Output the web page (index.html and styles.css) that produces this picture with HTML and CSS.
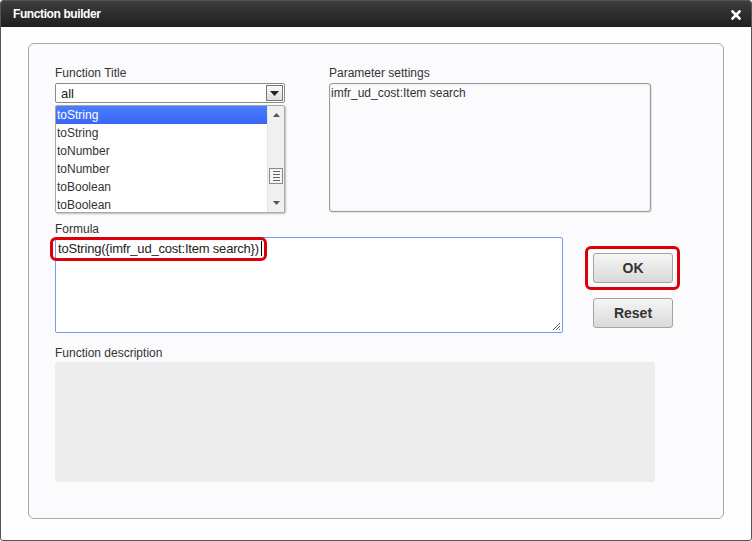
FILE: index.html
```html
<!DOCTYPE html>
<html lang="en">
<head>
    <meta charset="UTF-8">
    <title>Function builder</title>
    <link rel="stylesheet" href="styles.css">
</head>
<body>
    <div class="dialog">
        <div class="titlebar">
            <span class="title">Function builder</span>
            <svg class="close" width="10" height="10" viewBox="0 0 10 10">
                <path d="M1.5 1.5 L8.5 8.5 M8.5 1.5 L1.5 8.5" stroke="#fff" stroke-width="2.6" stroke-linecap="square"/>
            </svg>
        </div>

        <div class="panel">
            <!-- Título e parâmetros -->
            <div class="row top-row">
                <div class="col-func">
                    <label class="field-label">Function Title</label>
                    <div class="select">
                        <span>all</span>
                        <span class="select-btn">
                            <svg width="9" height="5" viewBox="0 0 9 5"><path d="M0 0 H9 L4.5 5 Z" fill="#222"/></svg>
                        </span>
                    </div>
                    <div class="list">
                        <ul class="items">
                            <li class="selected">toString</li>
                            <li>toString</li>
                            <li>toNumber</li>
                            <li>toNumber</li>
                            <li>toBoolean</li>
                            <li>toBoolean</li>
                        </ul>
                        <div class="scrollbar">
                            <svg class="arrow" width="7" height="4" viewBox="0 0 7 4"><path d="M0 4 H7 L3.5 0 Z" fill="#555"/></svg>
                            <div class="track">
                                <div class="thumb">
                                    <i></i><i></i><i></i><i></i>
                                </div>
                            </div>
                            <svg class="arrow" width="7" height="4" viewBox="0 0 7 4"><path d="M0 0 H7 L3.5 4 Z" fill="#555"/></svg>
                        </div>
                    </div>
                </div>
                <div class="col-param">
                    <label class="field-label">Parameter settings</label>
                    <div class="param-box">imfr_ud_cost:Item search</div>
                </div>
            </div>

            <!-- Fórmula e botões -->
            <div class="row mid-row">
                <div class="col-formula">
                    <label class="field-label">Formula</label>
                    <div class="formula">
                        <span class="formula-text">toString({imfr_ud_cost:Item search})<span class="caret"></span></span>
                        <span class="mark mark-formula"></span>
                        <svg class="grip" width="9" height="9" viewBox="0 0 9 9">
                            <path d="M8 1 L1 8 M8 4 L4 8 M8 7 L7 8" stroke="#666" stroke-width="1"/>
                        </svg>
                    </div>
                </div>
                <div class="buttons">
                    <div class="ok-wrap">
                        <button class="btn">OK</button>
                    </div>
                    <button class="btn">Reset</button>
                </div>
            </div>

            <!-- Descrição -->
            <div class="desc">
                <label class="field-label">Function description</label>
                <div class="desc-box"></div>
            </div>
        </div>
    </div>
</body>
</html>
```

FILE: styles.css
```css
body {
    margin: 0;
    background: #fff;
    font-family: "Liberation Sans", Arial, sans-serif;
    font-size: 12px;
    color: #333;
}

.dialog {
    width: 750px;
    height: 539px;
    border: 1px solid #555;
    border-radius: 3px;
    background: #fefefe;
    overflow: hidden;
}

.titlebar {
    height: 26px;
    background: linear-gradient(#3d3d3d, #1f1f1f);
    display: flex;
    align-items: center;
    justify-content: space-between;
    padding: 0 10px 0 12px;
}

.title {
    color: #fff;
    font-weight: bold;
    font-size: 12px;
    letter-spacing: -0.4px;
}

.close {
    margin-top: 2px;
}

/* Painel interno */
.panel {
    margin: 16px 27px 0 27px;
    height: 432px;
    border: 1px solid #a9a9a9;
    border-radius: 6px;
    background: #fbfbfd;
    padding: 21px 26px 21px 26px;
}

.row {
    display: flex;
}

.field-label {
    display: block;
    height: 16px;
    line-height: 16px;
    color: #333;
}

.col-func {
    width: 230px;
}

.col-param {
    margin-left: 44px;
    width: 322px;
}

.select {
    margin-top: 2px;
    height: 18px;
    border: 1px solid #8a8a8a;
    border-radius: 2px;
    background: #fff;
    display: flex;
    align-items: center;
    justify-content: space-between;
    padding: 0 1px 0 5px;
    color: #222;
    font-size: 13px;
}

.select-btn {
    width: 15px;
    height: 14px;
    border: 1px solid #777;
    background: linear-gradient(#fafafa, #dedede);
    display: flex;
    align-items: center;
    justify-content: center;
}

.list {
    margin-top: 2px;
    height: 106px;
    border: 1px solid #a8a8a8;
    border-radius: 2px;
    box-shadow: 1px 1px 2px rgba(0, 0, 0, 0.25);
    background: #fff;
    display: flex;
    overflow: hidden;
}

.items {
    flex: 1;
    list-style: none;
    margin: 0;
    padding: 0;
}

.items li {
    height: 18px;
    line-height: 18px;
    padding-left: 1px;
    font-size: 12px;
    color: #333;
}

.items li.selected {
    background: linear-gradient(#4a7dfc, #3b66f5);
    color: #fff;
}

.scrollbar {
    width: 16px;
    background: #f0f0f0;
    border-left: 1px solid #e4e4e4;
    display: flex;
    flex-direction: column;
    align-items: center;
}

.scrollbar .arrow {
    margin: 7px 0;
}

.track {
    flex: 1;
    width: 100%;
    position: relative;
}

.thumb {
    position: absolute;
    left: 1px;
    top: 44px;
    width: 12px;
    height: 14px;
    border: 1px solid #8a8a8a;
    background: #f4f4f4;
    display: flex;
    flex-direction: column;
    justify-content: center;
    align-items: center;
    gap: 2px;
}

.thumb i {
    display: block;
    width: 7px;
    height: 1px;
    background: #666;
}

.param-box {
    margin-top: 2px;
    height: 125px;
    border: 1px solid #9a9a9a;
    border-radius: 3px;
    box-shadow: inset 0 0 2px rgba(0, 0, 0, 0.15), 1px 1px 1px rgba(0, 0, 0, 0.1);
    background: #fbfbfd;
    padding: 2px 0 0 1px;
    font-size: 12px;
    color: #333;
}

.mid-row {
    margin-top: 8px;
}

.col-formula {
    width: 508px;
}

.formula {
    position: relative;
    height: 94px;
    border: 1px solid #7b9af0;
    border-radius: 2px;
    background: #fff;
    padding: 0 2px;
}

.formula-text {
    display: inline-block;
    margin-top: 3px;
    font-size: 13px;
    letter-spacing: -0.2px;
    color: #222;
}

.caret {
    display: inline-block;
    width: 1px;
    height: 15px;
    background: #000;
    vertical-align: -3px;
    margin-left: 2px;
}

.mark {
    position: absolute;
    border: 3px solid #d9000a;
    border-radius: 6px;
}

.mark-formula {
    left: -6px;
    top: -1px;
    width: 211px;
    height: 18px;
}

.grip {
    position: absolute;
    right: 1px;
    bottom: 1px;
}

.buttons {
    margin-left: 30px;
    padding-top: 32px;
    display: flex;
    flex-direction: column;
    align-items: flex-start;
}

.ok-wrap {
    margin-left: -8px;
    padding: 4px 4px 4px 5px;
    border: 3px solid #d9000a;
    border-radius: 6px;
    margin-top: -7px;
    display: flex;
}

.btn {
    width: 80px;
    height: 30px;
    border: 1px solid #a3a3a3;
    border-radius: 3px;
    background: linear-gradient(#f6f6f6, #d9d9d9);
    font-family: "Liberation Sans", Arial, sans-serif;
    font-size: 14px;
    font-weight: bold;
    color: #333;
    padding: 0;
}

.buttons > .btn {
    margin-top: 8px;
}

.desc {
    margin-top: 12px;
}

.desc-box {
    margin-top: 1px;
    width: 600px;
    height: 120px;
    background: #ededed;
    border-radius: 3px;
}
```
